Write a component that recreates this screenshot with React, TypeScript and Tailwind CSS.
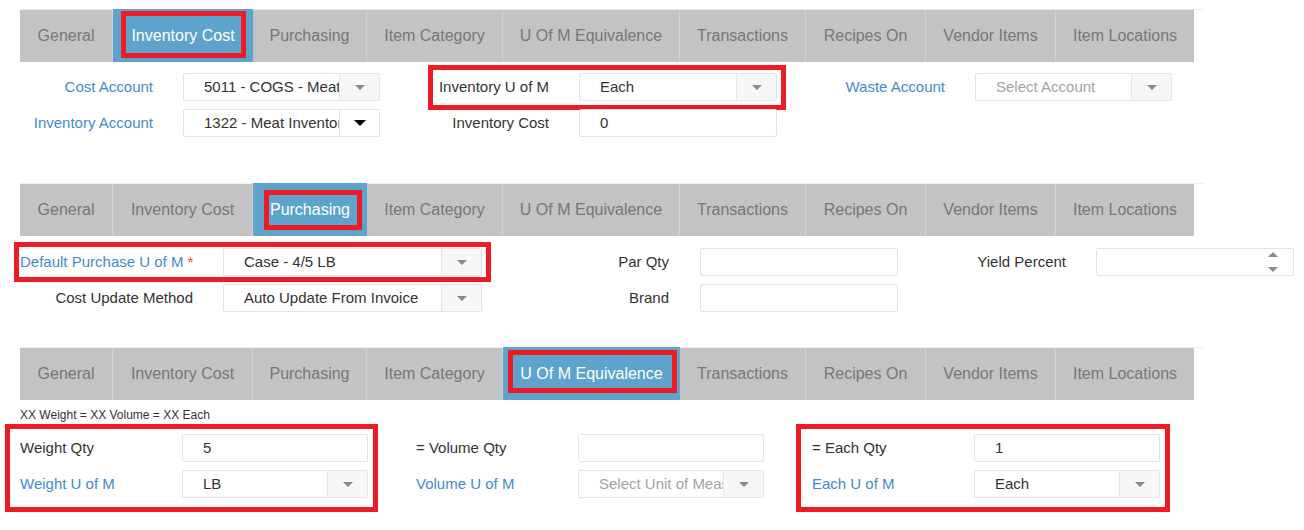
import type { ReactNode } from 'react';

const TABS = [
  'General',
  'Inventory Cost',
  'Purchasing',
  'Item Category',
  'U Of M Equivalence',
  'Transactions',
  'Recipes On',
  'Vendor Items',
  'Item Locations',
];

const TAB_WIDTHS = [93, 140, 114, 136, 177, 126, 120, 130, 138];

type Inset = { top: number; right: number; bottom: number; left: number };

// red annotation frame drawn over content
function Mark({ inset }: { inset: Inset }) {
  return (
    <div
      className="pointer-events-none absolute border-[5px] border-[#ed1c24]"
      style={{ top: inset.top, right: inset.right, bottom: inset.bottom, left: inset.left }}
    />
  );
}

function TabBar({ active, mark }: { active: number; mark: Inset }) {
  return (
    <div className="w-[1184px] border-t border-[#eeeeee]">
      <div className="flex h-[52px] w-[1174px] bg-[#c3c3c3]">
        {TABS.map((t, i) => {
          const on = i === active;
          return (
            <div
              key={t}
              style={{ width: TAB_WIDTHS[i] }}
              className={
                on
                  ? 'relative -mt-px flex h-[53px] items-center justify-center bg-[#5ea3cb] text-[16px] text-white'
                  : 'flex h-full items-center justify-center border-r border-[#d2d2d2] text-[16px] text-[#777777] last:border-r-0'
              }
            >
              {t}
              {on && <Mark inset={mark} />}
            </div>
          );
        })}
      </div>
    </div>
  );
}

function Caret({ dark }: { dark?: boolean }) {
  return (
    <span
      className={
        dark
          ? 'h-0 w-0 border-x-[6px] border-t-[6px] border-x-transparent border-t-black'
          : 'h-0 w-0 border-x-[5px] border-t-[5px] border-x-transparent border-t-[#8a8a8a]'
      }
    />
  );
}

function Select({
  w,
  value,
  placeholder,
  dark,
}: {
  w: number;
  value?: string;
  placeholder?: string;
  dark?: boolean;
}) {
  return (
    <div style={{ width: w }} className="flex h-[28px] rounded-[2px] border border-[#e3e3e3] bg-white">
      <span
        className={`min-w-0 flex-1 overflow-hidden whitespace-nowrap pl-[20px] text-[15px] leading-[26px] ${
          value ? 'text-[#333333]' : 'text-[#a3a3a3]'
        }`}
      >
        {value ?? placeholder}
      </span>
      <span
        className={`flex w-[40px] items-center justify-center border-l border-[#e6e6e6] ${
          dark ? 'bg-white' : 'bg-[#f7f7f7]'
        }`}
      >
        <Caret dark={dark} />
      </span>
    </div>
  );
}

function Input({ w, value, spin }: { w: number; value?: string; spin?: boolean }) {
  return (
    <div
      style={{ width: w }}
      className="relative flex h-[28px] items-center rounded-[2px] border border-[#e3e3e3] bg-white pl-[20px] text-[15px] text-[#333333]"
    >
      {value}
      {spin && (
        <span className="absolute right-[15px] top-[3px] flex flex-col items-center gap-[10px]">
          <span className="h-0 w-0 border-x-[5px] border-b-[5px] border-x-transparent border-b-[#8a8a8a]" />
          <span className="h-0 w-0 border-x-[5px] border-t-[5px] border-x-transparent border-t-[#8a8a8a]" />
        </span>
      )}
    </div>
  );
}

function Label({
  w,
  children,
  blue,
  left,
}: {
  w: number;
  children: ReactNode;
  blue?: boolean;
  left?: boolean;
}) {
  return (
    <div
      style={{ width: w }}
      className={`shrink-0 whitespace-nowrap text-[15px] ${left ? 'text-left' : 'text-right'} ${
        blue ? 'text-[#428bd1]' : 'text-[#333333]'
      }`}
    >
      {children}
    </div>
  );
}

export default function App() {
  return (
    <div
      className="h-[530px] w-[1304px] overflow-hidden bg-white pl-[20px] pt-[9px]"
      style={{ fontFamily: '"Liberation Sans", Arial, sans-serif' }}
    >
      {/* Inventory Cost */}
      <TabBar active={1} mark={{ top: 2, right: 7, bottom: 4, left: 8 }} />
      <div className="mt-[11px] flex flex-col gap-[8px]">
        <div className="flex h-[28px] items-center">
          <Label w={133} blue>Cost Account</Label>
          <div className="ml-[30px]">
            <Select w={197} value="5011 - COGS - Meat" />
          </div>
          <div className="relative flex items-center">
            <Label w={169}>Inventory U of M</Label>
            <div className="ml-[30px]">
              <Select w={198} value="Each" />
            </div>
            <Mark inset={{ top: -8, right: -9, bottom: -9, left: 48 }} />
          </div>
          <Label w={168} blue>Waste Account</Label>
          <div className="ml-[30px]">
            <Select w={197} placeholder="Select Account" />
          </div>
        </div>
        <div className="flex h-[28px] items-center">
          <Label w={133} blue>Inventory Account</Label>
          <div className="ml-[30px]">
            <Select w={197} value="1322 - Meat Inventory" dark />
          </div>
          <Label w={169}>Inventory Cost</Label>
          <div className="ml-[30px]">
            <Input w={198} value="0" />
          </div>
        </div>
      </div>

      {/* Purchasing */}
      <div className="mt-[46px]">
        <TabBar active={2} mark={{ top: 7, right: 5, bottom: 6, left: 11 }} />
      </div>
      <div className="mt-[12px] flex flex-col gap-[8px]">
        <div className="flex h-[28px] items-center">
          <div className="relative flex items-center">
            <Label w={173} blue>
              Default Purchase U of M <span className="text-[#e8452f]">*</span>
            </Label>
            <div className="ml-[30px]">
              <Select w={259} value="Case - 4/5 LB" />
            </div>
            <Mark inset={{ top: -6, right: -9, bottom: -6, left: -6 }} />
          </div>
          <Label w={187}>Par Qty</Label>
          <div className="ml-[31px]">
            <Input w={198} />
          </div>
          <Label w={168}>Yield Percent</Label>
          <div className="ml-[30px]">
            <Input w={198} spin />
          </div>
        </div>
        <div className="flex h-[28px] items-center">
          <Label w={173}>Cost Update Method</Label>
          <div className="ml-[30px]">
            <Select w={259} value="Auto Update From Invoice" />
          </div>
          <Label w={187}>Brand</Label>
          <div className="ml-[31px]">
            <Input w={198} />
          </div>
        </div>
      </div>

      {/* U Of M Equivalence */}
      <div className="mt-[35px]">
        <TabBar active={4} mark={{ top: 3, right: 3, bottom: 7, left: 5 }} />
      </div>
      <div className="mt-[8px] text-[12px] leading-[14px] text-[#333333]">
        XX Weight = XX Volume = XX Each
      </div>
      <div className="mt-[12px] flex gap-[48px]">
        <div className="relative flex flex-col gap-[8px]">
          <div className="flex h-[28px] items-center">
            <Label w={162} left>Weight Qty</Label>
            <Input w={186} value="5" />
          </div>
          <div className="flex h-[28px] items-center">
            <Label w={162} left blue>Weight U of M</Label>
            <Select w={186} value="LB" />
          </div>
          <Mark inset={{ top: -10, right: -10, bottom: -14, left: -15 }} />
        </div>
        <div className="flex flex-col gap-[8px]">
          <div className="flex h-[28px] items-center">
            <Label w={162} left>= Volume Qty</Label>
            <Input w={186} />
          </div>
          <div className="flex h-[28px] items-center">
            <Label w={162} left blue>Volume U of M</Label>
            <Select w={186} placeholder="Select Unit of Measure" />
          </div>
        </div>
        <div className="relative flex flex-col gap-[8px]">
          <div className="flex h-[28px] items-center">
            <Label w={162} left>= Each Qty</Label>
            <Input w={186} value="1" />
          </div>
          <div className="flex h-[28px] items-center">
            <Label w={162} left blue>Each U of M</Label>
            <Select w={186} value="Each" />
          </div>
          <Mark inset={{ top: -10, right: -10, bottom: -14, left: -16 }} />
        </div>
      </div>
    </div>
  );
}
